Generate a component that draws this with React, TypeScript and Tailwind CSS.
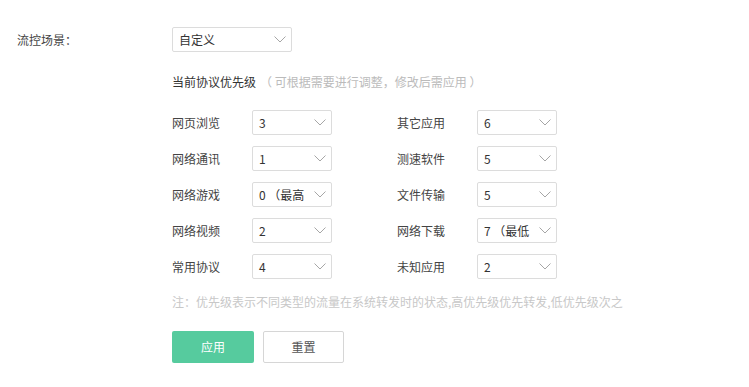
const FONT = "font-['Microsoft_YaHei','Noto_Sans_CJK_SC',sans-serif]"

const LEFT = [
  { label: "网页浏览", value: "3" },
  { label: "网络通讯", value: "1" },
  { label: "网络游戏", value: "0 （最高" },
  { label: "网络视频", value: "2" },
  { label: "常用协议", value: "4" },
]

const RIGHT = [
  { label: "其它应用", value: "6" },
  { label: "测速软件", value: "5" },
  { label: "文件传输", value: "5" },
  { label: "网络下载", value: "7 （最低" },
  { label: "未知应用", value: "2" },
]

const Chevron = ({ className }: { className: string }) => (
  <svg className={className} width="12" height="7" viewBox="0 0 12 7" fill="none">
    <polyline points="0.5,0.5 6,6 11.5,0.5" stroke="#a6a6a6" strokeWidth="1" />
  </svg>
)

const FakeSelect = ({ value, width }: { value: string; width: string }) => (
  <div
    className={`relative flex h-[25px] items-center rounded-[2px] border border-[#dcdcdc] bg-white pl-[6px] pr-[24px] ${width}`}
  >
    <span className="whitespace-nowrap text-[12px] leading-[23px] text-[#333]">{value}</span>
    <Chevron className="absolute right-[5px] top-[8px]" />
  </div>
)

const Row = ({ label, value }: { label: string; value: string }) => (
  <div className="flex h-[25px] items-center">
    <div className="w-[80px] text-[12px] text-[#444]">{label}</div>
    <FakeSelect value={value} width="w-[80px]" />
  </div>
)

export default function App() {
  return (
    <div className={`min-h-[387px] w-[749px] bg-white pl-[17px] pt-[27px] ${FONT}`}>
      <div className="flex h-[25px] items-center">
        <div className="w-[155px] text-[12px] text-[#444]">流控场景：</div>
        <FakeSelect value="自定义" width="w-[120px]" />
      </div>

      <div className="ml-[155px]">
        <div className="mt-[20px] flex h-[20px] items-center text-[12px]">
          <span className="text-[#333]">当前协议优先级</span>
          <span className="ml-[4px] text-[#bbb]">（ 可根据需要进行调整，修改后需应用 ）</span>
        </div>

        <div className="mt-[18px] flex gap-[65px]">
          <div className="flex flex-col gap-[11px]">
            {LEFT.map((r) => (
              <Row key={r.label} label={r.label} value={r.value} />
            ))}
          </div>
          <div className="flex flex-col gap-[11px]">
            {RIGHT.map((r) => (
              <Row key={r.label} label={r.label} value={r.value} />
            ))}
          </div>
        </div>

        <div className="mt-[14px] h-[18px] text-[12px] leading-[18px] text-[#c8c8c8]">
          注：优先级表示不同类型的流量在系统转发时的状态,高优先级优先转发,低优先级次之
        </div>

        <div className="mt-[20px] flex gap-[9px]">
          <button
            type="button"
            className="h-[32px] w-[82px] rounded-[2px] bg-[#56cb9e] text-[12px] text-white"
          >
            应用
          </button>
          <button
            type="button"
            className="h-[32px] w-[81px] rounded-[2px] border border-[#d6d6d6] bg-white text-[12px] text-[#555]"
          >
            重置
          </button>
        </div>
      </div>
    </div>
  )
}
